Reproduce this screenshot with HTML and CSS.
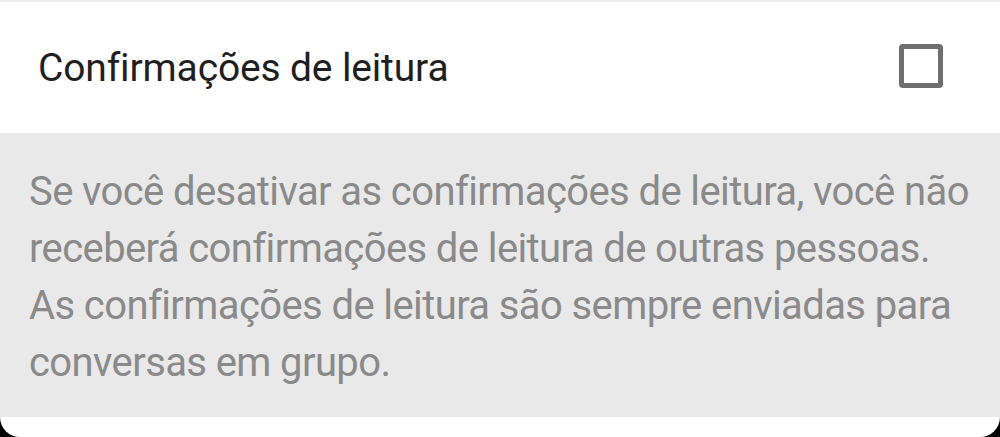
FILE: index.html
```html
<!DOCTYPE html>
<html lang="pt-BR">
<head>
  <meta charset="UTF-8" />
  <title>Confirmações de leitura</title>
  <link rel="stylesheet" href="styles.css">
</head>
<body>
  <div class="screen">
    <div class="top-line"></div>
    <div class="setting-row">
      <span class="setting-title">Confirmações de leitura</span>
      <span class="checkbox"></span>
    </div>
    <div class="setting-info">
      <p>Se você desativar as confirmações de leitura, você não receberá confirmações de leitura de outras pessoas. As confirmações de leitura são sempre enviadas para conversas em grupo.</p>
    </div>
    <div class="bottom"></div>
  </div>
</body>
</html>
```

FILE: styles.css
```css
/* ---- tela de configurações ---- */
body {
  margin: 0;
  background: #000;
  font-family: Roboto, 'Noto Sans', sans-serif;
}

.screen {
  width: 1000px;
  height: 437px;
  display: flex;
  flex-direction: column;
}

.top-line {
  height: 2px;
  background: #eeeeee;
}

.setting-row {
  height: 131px;
  background: #fff;
  display: flex;
  align-items: center;
  justify-content: space-between;
  padding: 0 57px 0 38px;
}

.setting-title {
  font-size: 39px;
  letter-spacing: -0.15px;
  color: #1f1f1f;
}

.checkbox {
  width: 34px;
  height: 34px;
  border: 5px solid #6f6f6f;
  border-radius: 4px;
  margin-top: -4px;
}

.setting-info {
  height: 284px;
  background: #e9e9e9;
  padding: 0 18px 0 29px;
  box-sizing: border-box;
}

.setting-info p {
  margin: 0;
  padding-top: 30px;
  font-size: 40px;
  letter-spacing: -0.6px;
  line-height: 57px;
  color: #8a8a8a;
}

.bottom {
  flex: 1;
  background: #fff;
  border-radius: 0 0 22px 22px;
}
```
